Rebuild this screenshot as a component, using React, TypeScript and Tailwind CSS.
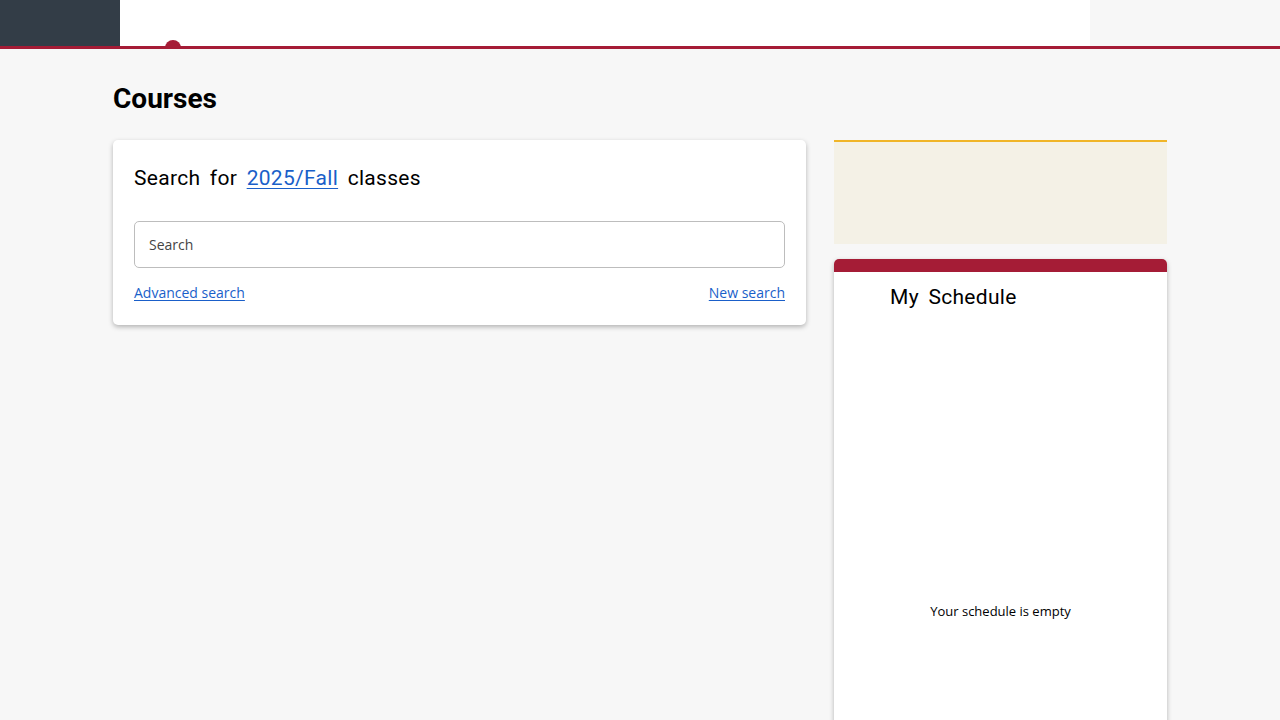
const Header = () => (
  <header className="relative">
    <div className="flex h-[46px]">
      <div className="w-[120px] bg-[#333d47]" />
      <div className="w-[970px] bg-white" />
      <div className="flex-1 bg-[#f7f7f7]" />
    </div>
    <div className="h-[3px] bg-[#a51c36]" />
    <div className="absolute left-[165px] top-[40px] h-[8px] w-[16px] rounded-t-full bg-[#a51c36]" />
  </header>
);

const SearchCard = () => (
  <section className="w-[693px] rounded-[5px] bg-white px-[21px] pb-[22px] pt-[25px] shadow-[0_2px_5px_rgba(0,0,0,0.28)]">
    <h2 className="font-['Roboto',sans-serif] text-[21px] leading-[26px] tracking-[0.3px] text-black [word-spacing:4px]">
      Search for{" "}
      <a href="#" className="text-[#1a5fc9] underline decoration-1 underline-offset-[3px]">
        2025/Fall
      </a>{" "}
      classes
    </h2>
    <div className="mt-[30px] flex h-[47px] items-center rounded-[5px] border border-[#bdbdbd] px-[14px]">
      <span className="font-['Open_Sans',sans-serif] text-[14px] text-[#444]">Search</span>
    </div>
    <div className="mt-[15px] flex justify-between font-['Open_Sans',sans-serif] text-[14px] leading-[20px]">
      <a href="#" className="text-[#1a5fc9] underline decoration-1 underline-offset-2">
        Advanced search
      </a>
      <a href="#" className="text-[#1a5fc9] underline decoration-1 underline-offset-2">
        New search
      </a>
    </div>
  </section>
);

const ScheduleCard = () => (
  <section className="mt-[15px] h-[470px] overflow-hidden rounded-t-[5px] bg-white shadow-[0_2px_5px_rgba(0,0,0,0.28)]">
    <div className="h-[13px] bg-[#a51c36]" />
    <h2 className="pl-[56px] pt-[12px] font-['Roboto',sans-serif] text-[21px] leading-[26px] tracking-[0.3px] text-black [word-spacing:4px]">
      My Schedule
    </h2>
    <p className="mt-[292px] text-center font-['Open_Sans',sans-serif] text-[13px] text-black">
      Your schedule is empty
    </p>
  </section>
);

export default function App() {
  return (
    <div className="h-[720px] overflow-hidden bg-[#f7f7f7]">
      <Header />
      <main className="mx-auto w-[1054px]">
        <h1 className="pt-[33px] font-['Roboto',sans-serif] text-[28px] font-bold leading-[34px] text-black">
          Courses
        </h1>
        <div className="mt-[24px] flex items-start gap-[28px]">
          <SearchCard />
          <div className="w-[333px]">
            <div className="h-[104px] border-t-[2px] border-[#f0b528] bg-[#f4f1e6]" />
            <ScheduleCard />
          </div>
        </div>
      </main>
    </div>
  );
}
